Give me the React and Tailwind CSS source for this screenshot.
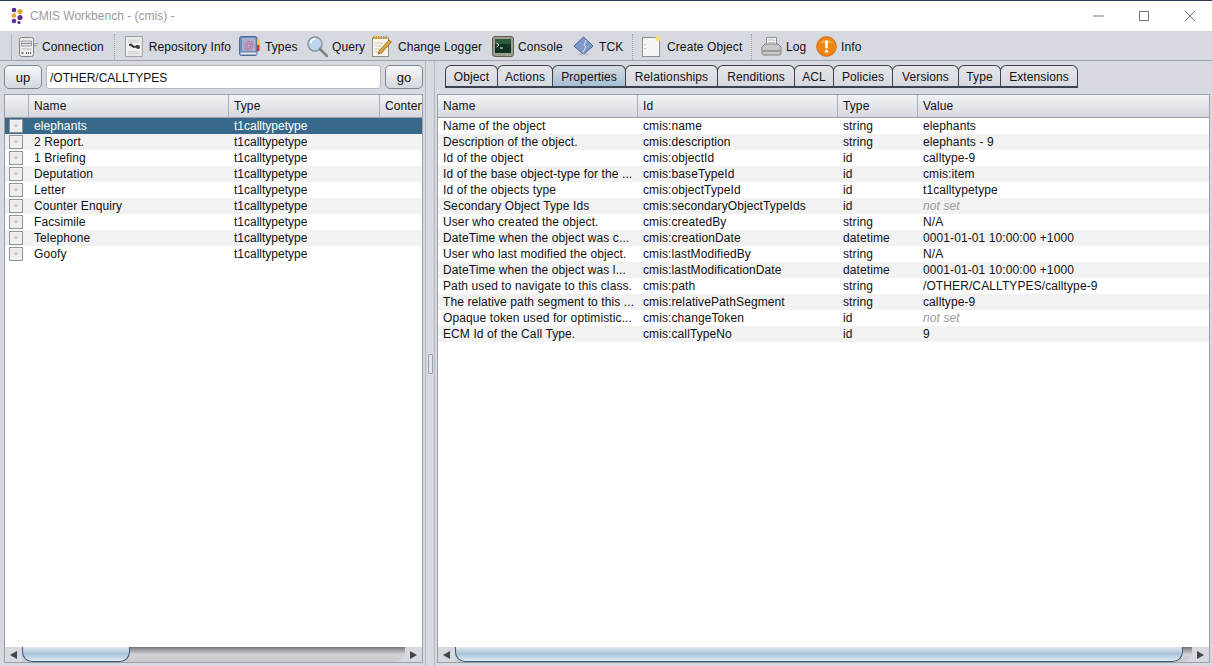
import React from 'react'

const leftRows = ['elephants', '2 Report.', '1 Briefing', 'Deputation', 'Letter', 'Counter Enquiry', 'Facsimile', 'Telephone', 'Goofy']

const propRows = [
    ['Name of the object', 'cmis:name', 'string', 'elephants'],
    ['Description of the object.', 'cmis:description', 'string', 'elephants - 9'],
    ['Id of the object', 'cmis:objectId', 'id', 'calltype-9'],
    ['Id of the base object-type for the ...', 'cmis:baseTypeId', 'id', 'cmis:item'],
    ['Id of the objects type', 'cmis:objectTypeId', 'id', 't1calltypetype'],
    ['Secondary Object Type Ids', 'cmis:secondaryObjectTypeIds', 'id', null],
    ['User who created the object.', 'cmis:createdBy', 'string', 'N/A'],
    ['DateTime when the object was c...', 'cmis:creationDate', 'datetime', '0001-01-01 10:00:00 +1000'],
    ['User who last modified the object.', 'cmis:lastModifiedBy', 'string', 'N/A'],
    ['DateTime when the object was l...', 'cmis:lastModificationDate', 'datetime', '0001-01-01 10:00:00 +1000'],
    ['Path used to navigate to this class.', 'cmis:path', 'string', '/OTHER/CALLTYPES/calltype-9'],
    ['The relative path segment to this ...', 'cmis:relativePathSegment', 'string', 'calltype-9'],
    ['Opaque token used for optimistic...', 'cmis:changeToken', 'id', null],
    ['ECM Id of the Call Type.', 'cmis:callTypeNo', 'id', '9'],
]

const tabs = ['Object', 'Actions', 'Properties', 'Relationships', 'Renditions', 'ACL', 'Policies', 'Versions', 'Type', 'Extensions']
const tabWidths = [53, 56, 74, 93, 78, 40, 60, 67, 43, 78]

function AppLogo() {
    return (
        <svg width="16" height="18" viewBox="0 0 16 18">
            <circle cx="4" cy="3" r="2.300" fill="#5b2d8e"/>
            <circle cx="10" cy="4.500" r="2.600" fill="#e0a92a"/>
            <circle cx="4" cy="8.500" r="2.300" fill="#e0a92a"/>
            <circle cx="10" cy="10.500" r="2.600" fill="#5b2d8e"/>
            <circle cx="4" cy="14" r="2.300" fill="#5b2d8e"/>
            <circle cx="9" cy="15.500" r="1.600" fill="#5b2d8e"/>
        </svg>
    )
}

function ConnectionIcon() {
    return (
        <svg width="22" height="20" viewBox="0 0 22 20">
            <path d="M15 6.500h5M15 8.500h4" stroke="#9a9fa4" strokeWidth="1"/>
            <rect x="1.500" y="0.500" width="14" height="19" rx="2" fill="#eeeeec" stroke="#80848a"/>
            <path d="M3.500 4h10v5h-10z" fill="#dcdedf" stroke="#8f9498" strokeWidth="0.800"/>
            <path d="M3.500 6.500h10" stroke="#8f9498"/>
            <path d="M3.500 12h10" stroke="#b5b8bb"/>
            <path d="M8 16h6" stroke="#666" strokeDasharray="1 1" strokeWidth="2"/>
            <rect x="3.500" y="15" width="2" height="2" fill="#777"/>
        </svg>
    )
}

function RepoIcon() {
    return (
        <svg width="19" height="21" viewBox="0 0 19 21">
            <rect x="0.500" y="0.500" width="17" height="20" fill="#f1f1ef" stroke="#9a9a9a"/>
            <path d="M3 4h12M3 6h12M3 16h12M3 18h12" stroke="#c9c9c9"/>
            <path d="M4 8l2.500-.5 2 2 1.500.5 2-1 3 .5v3l-2.500.5-2-1.500-2 .5-2-1.500-2.500-1z" fill="#3c3c3c"/>
        </svg>
    )
}

function TypesIcon() {
    return (
        <svg width="21" height="21" viewBox="0 0 21 21">
            <rect x="0.500" y="0.500" width="17.500" height="19" rx="2" fill="#6f8cb8" stroke="#4d6692"/>
            <rect x="3" y="2" width="13.500" height="13" fill="#a9adcf"/>
            <rect x="1.500" y="16.500" width="16" height="2" fill="#dfe4ec"/>
            <text x="5" y="12.500" fontSize="10" fill="#c66a8c" fontFamily="Liberation Sans, sans-serif">@</text>
            <rect x="18" y="3" width="2.500" height="6" fill="#e6c93a"/>
            <rect x="18" y="9" width="2.500" height="6" fill="#d23a2a"/>
        </svg>
    )
}

function QueryIcon() {
    return (
        <svg width="21" height="21" viewBox="0 0 21 21">
            <circle cx="8" cy="8" r="7" fill="#bcd6ec" stroke="#8b98a6" strokeWidth="1.600"/>
            <path d="M3.500 7a5 5 0 0 1 5-4" stroke="#fff" strokeWidth="1.500" fill="none"/>
            <path d="M13 13l7 7" stroke="#7c8288" strokeWidth="2.600" strokeLinecap="round"/>
        </svg>
    )
}

function LoggerIcon() {
    return (
        <svg width="21" height="21" viewBox="0 0 21 21">
            <rect x="0.500" y="2" width="16" height="18.500" fill="#f7f5ea" stroke="#8c8c80"/>
            <path d="M1 1.500h15" stroke="#c79a1e" strokeWidth="3" strokeDasharray="1.500 1"/>
            <path d="M3 7h8M3 10h6M3 13h5M3 16h9" stroke="#c9c8bd"/>
            <path d="M7 15L17 4l2.500 2-10 11-3.500 1z" fill="#e0a53a" stroke="#7a5a1c" strokeWidth="0.700"/>
        </svg>
    )
}

function ConsoleIcon() {
    return (
        <svg width="22" height="21" viewBox="0 0 22 21">
            <rect x="0.500" y="0.500" width="21" height="20" rx="2.500" fill="#9b9d8f" stroke="#5f6156"/>
            <rect x="3" y="3" width="16" height="14" fill="#12331f"/>
            <path d="M3 3h16v5H3z" fill="#2d5a3c"/>
            <path d="M4.500 7l2.500 2-2.500 2M8 12h3" stroke="#fff" strokeWidth="1" fill="none"/>
            <rect x="14" y="18" width="2" height="1.500" fill="#8cd050"/>
        </svg>
    )
}

function TckIcon() {
    return (
        <svg width="21" height="21" viewBox="0 0 21 21">
            <path d="M10.500 1l9.500 9-9.500 8.500L1 10z" fill="#7f99cc" stroke="#4c628f"/>
            <path d="M13 4l-2 5 2 2-3 5" stroke="#dfe6f2" strokeWidth="1" fill="none"/>
            <path d="M5 18.500h11" stroke="#b9bdc4" strokeWidth="1.500"/>
        </svg>
    )
}

function CreateIcon() {
    return (
        <svg width="20" height="21" viewBox="0 0 20 21">
            <rect x="0.500" y="1.500" width="17" height="19" fill="#f5f5f3" stroke="#8f8f8f"/>
            <path d="M3 8v1M3 12v1" stroke="#999"/>
            <circle cx="16" cy="2.500" r="2.500" fill="#f3e27a"/>
        </svg>
    )
}

function LogIcon() {
    return (
        <svg width="21" height="21" viewBox="0 0 21 21">
            <path d="M5.500 1.500h10v8h-10z" fill="#f6f6f6" stroke="#8d8d8d"/>
            <path d="M7 4h7M7 6.500h7" stroke="#bcbcbc"/>
            <path d="M1 11l3-3h13l3 3v6a2 2 0 0 1-2 2H3a2 2 0 0 1-2-2z" fill="#c8c9cb" stroke="#808080"/>
            <path d="M2 15h17" stroke="#8b8b8b" strokeWidth="1.500"/>
        </svg>
    )
}

function InfoIcon() {
    return (
        <svg width="21" height="21" viewBox="0 0 21 21">
            <circle cx="10.500" cy="10.500" r="9.800" fill="#ee8516" stroke="#d76a0a"/>
            <path d="M4 7a7.500 6 0 0 1 13 0z" fill="#f8aa4e"/>
            <rect x="9.200" y="4.500" width="2.600" height="8" rx="0.800" fill="#fff"/>
            <circle cx="10.500" cy="15.200" r="1.500" fill="#fff"/>
        </svg>
    )
}

function Sep() {
    return <div className="w-px h-[26px] border-l border-dotted border-[#9aa0a8]"/>
}

function Tool({icon, label, className}) {
    return (
        <div className={'flex items-center shrink-0 whitespace-nowrap ' + className}>
            {icon}
            <span>{label}</span>
        </div>
    )
}

function Btn({label, w}) {
    return (
        <button className={'h-[24px] pt-[1px] rounded-[5px] border border-[#7e8792] bg-gradient-to-b from-[#f7f8fa] to-[#d3d7de] text-[13px] text-[#111] shrink-0 ' + w}>
            {label}
        </button>
    )
}

function HeadCell({label, w}) {
    return (
        <div className={'h-full border-r border-[#a8aeb6] pl-[5px] flex items-center overflow-hidden whitespace-nowrap shrink-0 ' + w}>
            {label}
        </div>
    )
}

function ScrollBar({thumb}) {
    return (
        <div className="h-[15px] flex items-stretch bg-[#d6d9df] shrink-0">
            <div className="w-[17px] flex items-center justify-center">
                <div className="border-y-[4px] border-y-transparent border-r-[7px] border-r-[#444]"/>
            </div>
            <div className="flex-1 flex bg-gradient-to-b from-[#777a7e] via-[#d2d4d8] to-[#c8cacf] rounded-br-[10px] min-w-0">
                <div className={'h-[15px] rounded-b-[10px] border-x border-b border-[#3f5a78] bg-gradient-to-b from-[#dfe5ec] via-[#a9c2d8] to-[#e4edf5] shrink-0 ' + thumb}/>
            </div>
            <div className="w-[17px] flex items-center justify-center">
                <div className="border-y-[4px] border-y-transparent border-l-[7px] border-l-[#444]"/>
            </div>
        </div>
    )
}

export default function App() {
    return (
        <div className="w-[1212px] h-[666px] overflow-hidden flex flex-col bg-[#d6d9df] text-[12px] tracking-[0.1px] text-[#111] font-['Liberation_Sans',Arial,sans-serif]">
            {/* title bar */}
            <div className="h-[31px] shrink-0 bg-white border-t border-[#2b3f55] flex items-center pl-[10px]">
                <AppLogo/>
                <span className="ml-[4px] text-[#9a9a9a] tracking-normal">CMIS Workbench - (cmis) -</span>
                <div className="ml-auto flex items-center">
                    <svg width="12" height="12" viewBox="0 0 12 12" className="mr-[33px]"><path d="M0 6h11" stroke="#777"/></svg>
                    <svg width="12" height="12" viewBox="0 0 12 12" className="mr-[34px]"><rect x="1.500" y="1.500" width="9" height="9" fill="none" stroke="#777"/></svg>
                    <svg width="12" height="12" viewBox="0 0 12 12" className="mr-[16px]"><path d="M1 1l10 10M11 1L1 11" stroke="#777"/></svg>
                </div>
            </div>

            {/* toolbar */}
            <div className="h-[30px] shrink-0 border-b border-[#9ea4ac] flex items-center pl-[11px] pt-[2px]">
                <div className="w-px h-[26px] bg-[#aeb3ba] mr-[6px]"/>
                <Tool icon={<ConnectionIcon/>} label="Connection" className="gap-[2px] w-[87px]"/>
                <div className="ml-[9px] mr-[10px]"><Sep/></div>
                <Tool icon={<RepoIcon/>} label="Repository Info" className="gap-[5px] w-[106px]"/>
                <Tool icon={<TypesIcon/>} label="Types" className="gap-[5px] w-[68px] ml-[8px]"/>
                <Tool icon={<QueryIcon/>} label="Query" className="gap-[4px] w-[65px]"/>
                <Tool icon={<LoggerIcon/>} label="Change Logger" className="gap-[5px] w-[113px]"/>
                <Tool icon={<ConsoleIcon/>} label="Console" className="gap-[4px] ml-[7px] w-[80px]"/>
                <Tool icon={<TckIcon/>} label="TCK" className="gap-[5px] ml-[1px] w-[59px]"/>
                <div className="mr-[9px]"><Sep/></div>
                <Tool icon={<CreateIcon/>} label="Create Object" className="gap-[5px] w-[101px]"/>
                <div className="ml-[8px] mr-[9px]"><Sep/></div>
                <Tool icon={<LogIcon/>} label="Log" className="gap-[4px] w-[55px]"/>
                <Tool icon={<InfoIcon/>} label="Info" className="gap-[4px]"/>
            </div>

            {/* split panes */}
            <div className="flex-1 flex min-h-0">
                {/* left pane */}
                <div className="w-[423px] shrink-0 pl-[4px] pb-[3px] flex flex-col">
                    <div className="flex items-start gap-[4px] pt-[4px] h-[33px] shrink-0">
                        <Btn label="up" w="w-[38px]"/>
                        <div className="w-[335px] h-[24px] pt-[1px] bg-white border border-[#b5bac1] rounded-[3px] flex items-center pl-[3px] tracking-normal shrink-0">/OTHER/CALLTYPES</div>
                        <Btn label="go" w="w-[38px]"/>
                    </div>
                    <div className="flex-1 border border-[#9aa0a8] flex flex-col min-h-0">
                        <div className="h-[23px] shrink-0 flex border-b border-[#9aa0a8] bg-gradient-to-b from-[#f2f3f6] to-[#d6d9df]">
                            <HeadCell label="" w="w-[24px]"/>
                            <HeadCell label="Name" w="w-[200px]"/>
                            <HeadCell label="Type" w="w-[151px]"/>
                            <div className="pl-[5px] flex items-center overflow-hidden whitespace-nowrap flex-1">Conten</div>
                        </div>
                        <div className="flex-1 bg-white min-h-0">
                            {leftRows.map((name, i) => (
                                <div key={name} className={'h-[16px] flex items-center ' + (i === 0 ? 'bg-[#39698a] text-white' : i % 2 ? 'bg-[#f2f2f2]' : 'bg-white')}>
                                    <div className="w-[24px] shrink-0 pl-[4px]">
                                        <div className="w-[14px] h-[14px] border border-[#8e949b] bg-[#eeeeee] text-[#b0b0b0] text-[9px] leading-[12px] text-center">+</div>
                                    </div>
                                    <div className="w-[200px] shrink-0 pl-[5px]">{name}</div>
                                    <div className="pl-[5px] tracking-normal">t1calltypetype</div>
                                </div>
                            ))}
                        </div>
                        <ScrollBar thumb="w-[108px]"/>
                    </div>
                </div>

                {/* divider */}
                <div className="w-[14px] shrink-0 flex justify-center">
                    <div className="w-[10px] border-x border-[#b4b9c1] flex items-center justify-center">
                        <div className="w-[5px] h-[20px] border border-[#9aa0a8] rounded-[1px] bg-[#dfe2e7]"/>
                    </div>
                </div>

                {/* right pane */}
                <div className="flex-1 flex flex-col min-w-0 pr-[2px] pb-[3px]">
                    <div className="h-[33px] shrink-0 pt-[4px] pl-[8px] flex items-start">
                        {tabs.map((t, i) => (
                            <div
                                key={t}
                                style={{width: tabWidths[i]}}
                                className={'h-[23px] pt-[1px] -mr-px border border-[#39424e] border-b-2 rounded-t-[6px] flex items-center justify-center shrink-0 ' + (t === 'Properties' ? 'bg-gradient-to-b from-[#d6dbe2] to-[#a5bfd5]' : 'bg-gradient-to-b from-[#e4e6ea] to-[#d6d9df]')}
                            >
                                {t}
                            </div>
                        ))}
                    </div>
                    <div className="flex-1 border border-[#9aa0a8] flex flex-col min-h-0">
                        <div className="h-[23px] shrink-0 flex border-b border-[#9aa0a8] bg-gradient-to-b from-[#f2f3f6] to-[#d6d9df]">
                            <HeadCell label="Name" w="w-[200px]"/>
                            <HeadCell label="Id" w="w-[200px]"/>
                            <HeadCell label="Type" w="w-[80px]"/>
                            <div className="pl-[5px] flex items-center">Value</div>
                        </div>
                        <div className="flex-1 bg-white min-h-0">
                            {propRows.map((r, i) => (
                                <div key={r[1]} className={'h-[16px] flex items-center whitespace-nowrap ' + (i % 2 ? 'bg-[#f2f2f2]' : 'bg-white')}>
                                    <div className="w-[200px] shrink-0 pl-[5px] overflow-hidden">{r[0]}</div>
                                    <div className="w-[200px] shrink-0 pl-[5px]">{r[1]}</div>
                                    <div className="w-[80px] shrink-0 pl-[5px]">{r[2]}</div>
                                    <div className="pl-[5px]">{r[3] ?? <span className="italic text-[#9a9a9a]">not set</span>}</div>
                                </div>
                            ))}
                        </div>
                        <ScrollBar thumb="w-[728px]"/>
                    </div>
                </div>
            </div>
        </div>
    )
}
